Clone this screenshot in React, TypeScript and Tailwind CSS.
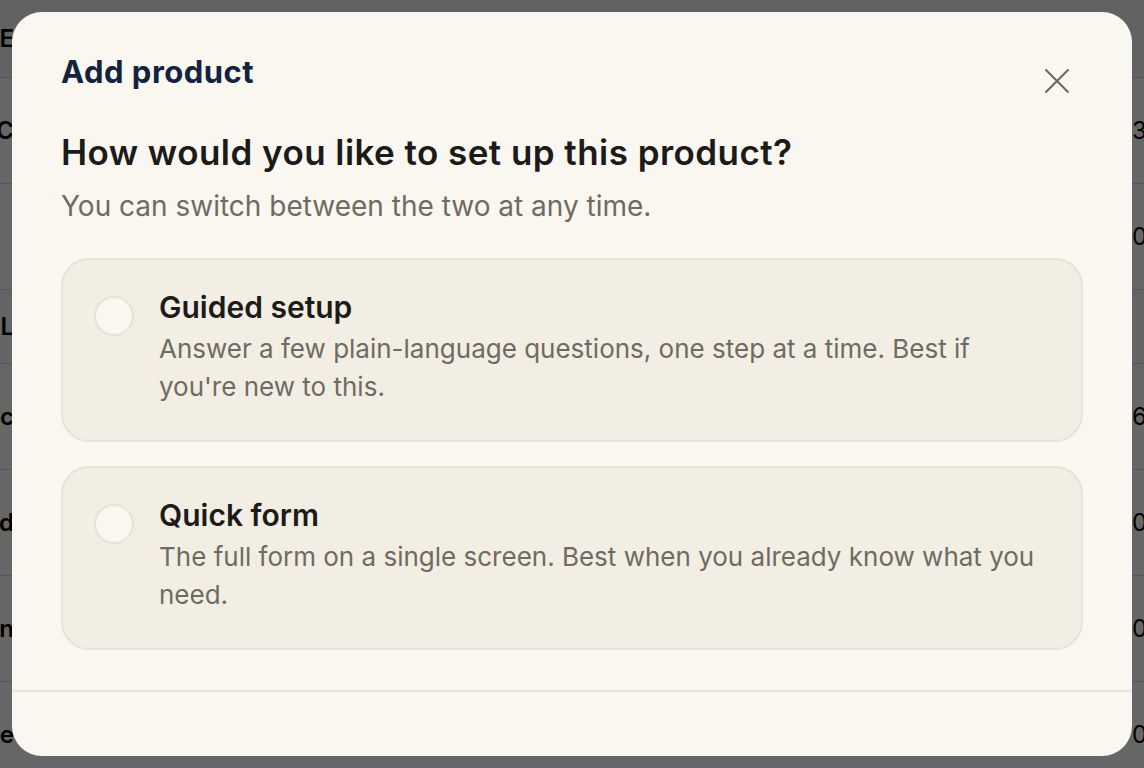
import { useState } from 'react'

type Mode = 'guided' | 'quick'

const OPTIONS: { id: Mode; title: string; description: string }[] = [
  {
    id: 'guided',
    title: 'Guided setup',
    description: "Answer a few plain-language questions, one step at a time. Best if you're new to this.",
  },
  {
    id: 'quick',
    title: 'Quick form',
    description: 'The full form on a single screen. Best when you already know what you need.',
  },
]

// rows of the product table sitting behind the dialog
const ROWS = [
  { left: 'NAME', right: '', header: true },
  { left: 'ABC', right: '3.50' },
  { left: '', right: '0.00' },
  { left: 'ALL', right: '', section: true },
  { left: 'Spec', right: '6.20' },
  { left: 'Bread', right: '0.00' },
  { left: 'Cinnamon', right: '0.00' },
  { left: 'Cheese', right: '0.00' },
]

function Backdrop() {
  return (
    <div className="absolute inset-0 bg-white">
      {ROWS.map((row, i) => (
        <div
          key={i}
          className={
            row.header
              ? 'flex items-center justify-between h-[78px] border-b border-gray-300 bg-gray-100'
              : row.section
              ? 'flex items-center justify-between h-[74px] border-b border-gray-300 bg-gray-50'
              : 'flex items-center justify-between h-[106px] border-b border-gray-300'
          }
        >
          <span className="-ml-[120px] w-[134px] text-right text-[24px] font-semibold text-black whitespace-nowrap">
            {row.left}
          </span>
          <span className="w-[60px] text-[24px] text-black -mr-[48px]">{row.right}</span>
        </div>
      ))}
    </div>
  )
}

export default function App() {
  const [mode, setMode] = useState<Mode | null>(null)

  return (
    <div
      className="relative w-[1144px] h-[768px] overflow-hidden"
      style={{ fontFamily: 'Inter, "Noto Sans", sans-serif' }}
    >
      <Backdrop />
      <div className="absolute inset-0 bg-black/60 flex items-center justify-center">
        <div className="w-[1120px] h-[744px] bg-[#faf7f0] rounded-[30px] flex flex-col overflow-hidden">
          {/* Body */}
          <div className="flex-1 px-[49px] pt-[43px]">
            <div className="flex items-start justify-between">
              <h2 className="text-[31px] leading-[34px] font-bold tracking-[0.5px] text-[#13233f]">Add product</h2>
              <button
                aria-label="Close"
                className="mt-[13px] mr-[13px] text-[#6b675e]"
              >
                <svg width="26" height="26" viewBox="0 0 26 26" fill="none" stroke="currentColor" strokeWidth="2">
                  <path d="M1.5 1.5l23 23M24.5 1.5l-23 23" />
                </svg>
              </button>
            </div>

            <h3 className="mt-[38px] text-[35px] leading-[40px] font-semibold tracking-[0.45px] text-[#1c1b19]">
              How would you like to set up this product?
            </h3>
            <p className="mt-[17px] text-[28px] leading-[34px] text-[#6e6b62]">
              You can switch between the two at any time.
            </p>

            <div className="mt-[35px] flex flex-col gap-[24px]">
              {OPTIONS.map((opt) => (
                <button
                  key={opt.id}
                  type="button"
                  onClick={() => setMode(opt.id)}
                  className="w-full flex items-start gap-[25px] text-left bg-[#f2eee4] border-2 border-[#e7e3d8] rounded-[28px] pl-[31px] pr-[36px] pt-[30px] pb-[34px]"
                >
                  <span className="mt-[6px] w-[40px] h-[40px] shrink-0 rounded-full border-2 border-[#e6e2d7] bg-[#faf7f0] flex items-center justify-center">
                    {mode === opt.id && <span className="w-[18px] h-[18px] rounded-full bg-[#13233f]" />}
                  </span>
                  <span className="flex flex-col">
                    <span className="text-[30px] leading-[34px] font-semibold text-[#1c1b19]">{opt.title}</span>
                    <span className="mt-[6px] text-[26px] leading-[38px] text-[#6e6b62]">{opt.description}</span>
                  </span>
                </button>
              ))}
            </div>
          </div>

          {/* Footer */}
          <div className="h-[66px] border-t-2 border-[#e9e5db]" />
        </div>
      </div>
    </div>
  )
}
